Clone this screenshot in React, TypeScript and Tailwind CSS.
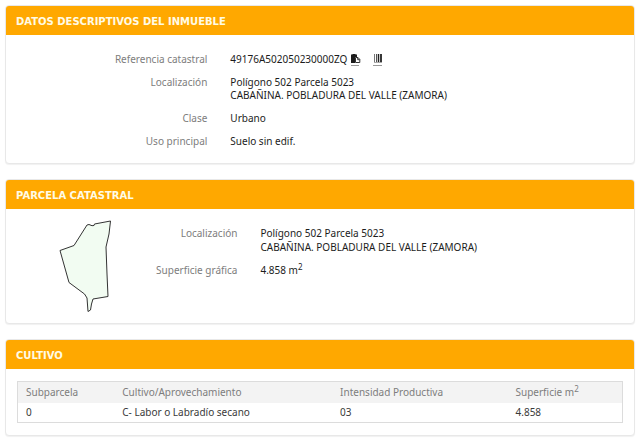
import React from "react";

const cultivos = [
  { subparcela: "0", cultivo: "C- Labor o Labradío secano", intensidad: "03", superficie: "4.858" },
];

function Panel({ title, children }: { title: string; children: React.ReactNode }) {
  return (
    <section className="rounded-[4px] border border-[#e8e8e8] bg-white shadow-[0_1px_1px_rgba(0,0,0,0.06)]">
      <h2 className="rounded-t-[3px] bg-[#ffa800] px-[10px] pt-[9px] pb-[7px] font-['DejaVu_Sans','Noto_Sans',sans-serif] text-[10px] leading-[13px] font-bold text-[#fffbe6]">
        {title}
      </h2>
      {children}
    </section>
  );
}

function Row({ label, children }: { label: string; children: React.ReactNode }) {
  return (
    <div className="flex">
      <dt className="w-1/3 shrink-0 pr-2 text-right text-[#7d7d7d]">{label}</dt>
      <dd className="flex-1 pl-[15px] text-[#1c1c1c]">{children}</dd>
    </div>
  );
}

function CopyIcon() {
  return (
    <svg width="11" height="13" viewBox="0 0 11 13" aria-hidden="true">
      <path d="M1 1.5h1.5V1h3v.5H7V4H5v6H1z" fill="#1c1c1c" />
      <path d="M5.5 4.5H8l1.8 1.9v3.1H5.5z" fill="#fff" stroke="#333" />
      <path d="M7.7 4.5v2.2h2" fill="none" stroke="#333" />
      <path d="M1 12.5h8" stroke="#999" />
    </svg>
  );
}

function BarcodeIcon() {
  return (
    <svg width="11" height="13" viewBox="0 0 11 13" aria-hidden="true">
      <path d="M2.5 1v8" stroke="#777" />
      <path d="M4.5 1v8" stroke="#555" />
      <path d="M6.5 1v8" stroke="#222" strokeWidth="1.5" />
      <path d="M9 1v8" stroke="#222" strokeWidth="1.8" />
      <path d="M2 9.5h8" stroke="#aaa" />
      <path d="M1 12.5h9" stroke="#999" />
    </svg>
  );
}

export default function App() {
  return (
    <main className="flex flex-col gap-[15px] bg-white p-[5px] font-['Noto_Sans',sans-serif] text-[10px] leading-[13px]">
      <Panel title="DATOS DESCRIPTIVOS DEL INMUEBLE">
        <dl className="flex flex-col gap-[10px] pt-[18px] pb-[15px]">
          <Row label="Referencia catastral">
            <div className="flex items-center">
              <span>49176A502050230000ZQ</span>
              <button type="button" aria-label="Copiar" className="ml-[3px]">
                <CopyIcon />
              </button>
              <button type="button" aria-label="Código de barras" className="ml-[11px]">
                <BarcodeIcon />
              </button>
            </div>
          </Row>
          <Row label="Localización">
            Polígono 502 Parcela 5023
            <br />
            CABAÑINA. POBLADURA DEL VALLE (ZAMORA)
          </Row>
          <Row label="Clase">Urbano</Row>
          <Row label="Uso principal">Suelo sin edif.</Row>
        </dl>
      </Panel>

      <Panel title="PARCELA CATASTRAL">
        <div className="flex py-[10px]">
          <div className="flex w-[23%] justify-end pr-[37px]">
            <svg width="54" height="94" viewBox="0 0 54 94" role="img" aria-label="Parcela">
              <path
                d="M1 31.5 L15 26.5 L28 6 L30 5.5 L33 6.7 L35 6.5 L35.5 5 L51.5 2 L50 15 L47 28 L48 55 L49 77.5 L34 80 L32.5 85 L31.5 91 L29 92.5 L28 79 L25.5 75 L10 63.5 Z"
                fill="#f2fcf2"
                stroke="#333"
                strokeWidth="1"
              />
            </svg>
          </div>
          <dl className="flex flex-1 flex-col gap-[9px] pt-[7px] leading-[14px]">
            <div className="flex">
              <dt className="w-[87px] text-right text-[#7d7d7d]">Localización</dt>
              <dd className="flex-1 pl-[23px] text-[#1c1c1c]">
                Polígono 502 Parcela 5023
                <br />
                CABAÑINA. POBLADURA DEL VALLE (ZAMORA)
              </dd>
            </div>
            <div className="flex">
              <dt className="w-[87px] text-right text-[#7d7d7d]">Superficie gráfica</dt>
              <dd className="flex-1 pl-[23px] text-[#1c1c1c]">
                4.858 m<sup className="text-[8px]">2</sup>
              </dd>
            </div>
          </dl>
        </div>
      </Panel>

      <Panel title="CULTIVO">
        <div className="px-[11px] py-3">
          <table className="w-full table-fixed border border-[#dcdcdc] text-left">
            <thead className="bg-[#f3f3f3] text-[#7d7d7d]">
              <tr>
                <th className="w-[16%] px-2 py-1 font-normal">Subparcela</th>
                <th className="w-[36%] px-2 py-1 font-normal">Cultivo/Aprovechamiento</th>
                <th className="w-[29%] px-2 py-1 font-normal">Intensidad Productiva</th>
                <th className="px-2 py-1 font-normal">
                  Superficie m<sup className="text-[8px]">2</sup>
                </th>
              </tr>
            </thead>
            <tbody className="text-[#3a3a3a]">
              {cultivos.map((c) => (
                <tr key={c.subparcela}>
                  <td className="px-2 py-[3px]">{c.subparcela}</td>
                  <td className="px-2 py-[3px]">{c.cultivo}</td>
                  <td className="px-2 py-[3px]">{c.intensidad}</td>
                  <td className="px-2 py-[3px]">{c.superficie}</td>
                </tr>
              ))}
            </tbody>
          </table>
        </div>
      </Panel>
    </main>
  );
}
